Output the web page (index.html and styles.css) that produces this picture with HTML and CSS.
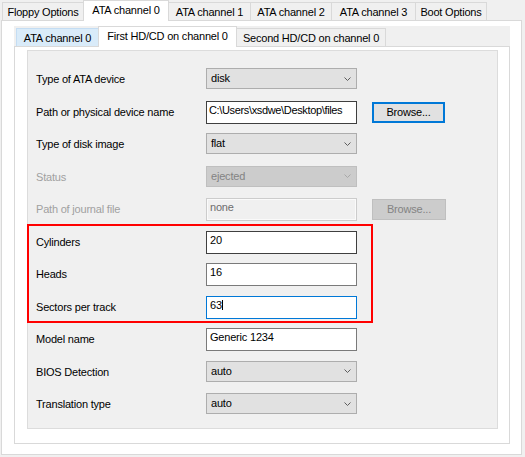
FILE: index.html
```html
<!DOCTYPE html>
<html>
<head>
<meta charset="utf-8">
<link rel="stylesheet" href="styles.css">
</head>
<body>
<div class="dlg">
  <div class="tabs outer-tabs">
    <div class="tab first t-floppy">Floppy Options</div>
    <div class="tab sel t-ata0">ATA channel 0</div>
    <div class="tab t-ata1">ATA channel 1</div>
    <div class="tab t-ata2">ATA channel 2</div>
    <div class="tab t-ata3">ATA channel 3</div>
    <div class="tab t-boot">Boot Options</div>
  </div>
  <div class="pane outer-pane">
    <div class="subtabs">
      <div class="tabs inner-tabs">
        <div class="tab first hover t-ch0">ATA channel 0</div>
        <div class="tab sel t-first">First HD/CD on channel 0</div>
        <div class="tab t-second">Second HD/CD on channel 0</div>
      </div>
      <div class="pane inner-pane">
        <div class="group">
          <div class="row">
            <div class="lbl">Type of ATA device</div>
            <div class="combo"><span>disk</span><svg class="chev" width="7" height="4" viewBox="0 0 7 4"><polyline points="0.5,0.5 3.5,3.5 6.5,0.5" /></svg></div>
          </div>
          <div class="row">
            <div class="lbl">Path or physical device name</div>
            <div class="tb dark path">C:\Users\xsdwe\Desktop\files</div>
            <div class="btn def">Browse...</div>
          </div>
          <div class="row">
            <div class="lbl">Type of disk image</div>
            <div class="combo"><span>flat</span><svg class="chev" width="7" height="4" viewBox="0 0 7 4"><polyline points="0.5,0.5 3.5,3.5 6.5,0.5" /></svg></div>
          </div>
          <div class="row">
            <div class="lbl dis">Status</div>
            <div class="combo dis"><span>ejected</span><svg class="chev" width="7" height="4" viewBox="0 0 7 4"><polyline points="0.5,0.5 3.5,3.5 6.5,0.5" /></svg></div>
          </div>
          <div class="row">
            <div class="lbl dis">Path of journal file</div>
            <div class="tb dis">none</div>
            <div class="btn dis">Browse...</div>
          </div>
          <div class="hl">
            <div class="row">
              <div class="lbl">Cylinders</div>
              <div class="tb dark">20</div>
            </div>
            <div class="row">
              <div class="lbl">Heads</div>
              <div class="tb">16</div>
            </div>
            <div class="row">
              <div class="lbl">Sectors per track</div>
              <div class="tb focus">63<span class="caret"></span></div>
            </div>
          </div>
          <div class="row">
            <div class="lbl">Model name</div>
            <div class="tb">Generic 1234</div>
          </div>
          <div class="row">
            <div class="lbl">BIOS Detection</div>
            <div class="combo"><span>auto</span><svg class="chev" width="7" height="4" viewBox="0 0 7 4"><polyline points="0.5,0.5 3.5,3.5 6.5,0.5" /></svg></div>
          </div>
          <div class="row">
            <div class="lbl">Translation type</div>
            <div class="combo"><span>auto</span><svg class="chev" width="7" height="4" viewBox="0 0 7 4"><polyline points="0.5,0.5 3.5,3.5 6.5,0.5" /></svg></div>
          </div>
        </div>
      </div>
    </div>
  </div>
</div>
</body>
</html>
```

FILE: styles.css
```css
* { box-sizing: border-box; }

body {
  margin: 0;
  background: #f0f0f0;
  font-family: "Liberation Sans", Arial, sans-serif;
  font-size: 11px;
  letter-spacing: -0.2px;
  color: #000;
}

.dlg {
  width: 525px;
  height: 457px;
}

/* ---------- tabs ---------- */
.tabs {
  display: flex;
  align-items: flex-end;
  height: 20px;
  position: relative;
  z-index: 1;
}

.outer-tabs { padding-left: 2px; }

.tab {
  flex: none;
  height: 18px;
  border-top: 1px solid #d9d9d9;
  border-right: 1px solid #d9d9d9;
  background: #f0f0f0;
  text-align: center;
  line-height: 16px;
  padding-top: 1px;
  white-space: nowrap;
}

.tab.first { border-left: 1px solid #d9d9d9; }

.tab.sel {
  height: 21px;
  margin-bottom: -1px;
  background: #fff;
  border-left: 1px solid #d9d9d9;
}

.tab.hover {
  background: #d9ebf9;
  border-color: #c4ddf3;
}

.t-floppy { width: 81px; border-right: 0; }
.t-ata0 { width: 86px; }
.t-ata1 { width: 82px; }
.t-ata2 { width: 81px; }
.t-ata3 { width: 84px; }
.t-boot { width: 71px; }

.t-ch0 { width: 82px; border-right: 0; }
.t-first { width: 139px; }
.t-second { width: 149px; }

/* ---------- panes ---------- */
.pane {
  border: 1px solid #d9d9d9;
  background: #fff;
}

.outer-pane {
  margin-left: 1px;
  width: 521px;
  height: 435px;
}

.subtabs {
  margin: 5px 0 0 12px;
  width: 496px;
}

.inner-tabs {
  background: #f0f0f0;
  padding-left: 2px;
}

.inner-pane {
  width: 496px;
  height: 398px;
}

/* ---------- group ---------- */
.group {
  margin: 3px 0 0 12px;
  width: 471px;
  height: 379px;
  background: #f0f0f0;
  border: 1px solid #dcdcdc;
  padding: 17px 0 0 8px;
  display: flex;
  flex-direction: column;
  gap: 9.5px;
}

.row {
  display: flex;
  align-items: center;
  height: 23px;
}

.lbl {
  flex: none;
  width: 170px;
  white-space: nowrap;
  padding-bottom: 1px;
}

.lbl.dis { color: #a0a0a0; }

.combo {
  flex: none;
  width: 151px;
  height: 21px;
  margin-bottom: 2px;
  border: 1px solid #adadad;
  background: #e1e1e1;
  display: flex;
  align-items: center;
  justify-content: space-between;
  padding: 0 5px 1px 4px;
}

.chev { display: block; margin-top: 1px; }
.chev polyline { fill: none; stroke: #5d5d5d; stroke-width: 1; }

.combo.dis {
  background: #cccccc;
  border-color: #bfbfbf;
  color: #838383;
}
.combo.dis .chev polyline { stroke: #a8a8a8; }

.tb {
  flex: none;
  width: 151px;
  height: 23px;
  border: 1px solid #7a7a7a;
  background: #fff;
  padding: 2px 0 0 3px;
  line-height: 13px;
  overflow: hidden;
  white-space: nowrap;
}

.tb.path { padding-left: 2px; letter-spacing: -0.35px; }
.tb.dark { border-color: #3f3f3f; }
.tb.focus { border-color: #0078d7; }

.tb.dis {
  background: #f0f0f0;
  border-color: #cccccc;
  box-shadow: inset 0 0 0 1px #fafafa;
  color: #6d6d6d;
}

.caret {
  display: inline-block;
  width: 1px;
  height: 10px;
  background: #000;
  vertical-align: -1px;
  margin-left: 0;
}

.btn {
  flex: none;
  margin-left: 15px;
  width: 74px;
  height: 21px;
  border: 1px solid #adadad;
  background: #e1e1e1;
  text-align: center;
  line-height: 19px;
}

.btn.def {
  width: 73px;
  border: 2px solid #0078d7;
  line-height: 17px;
}

.btn.dis {
  background: #cccccc;
  border-color: #bfbfbf;
  color: #838383;
}

/* ---------- highlight ---------- */
.hl {
  width: 346px;
  margin: -6.5px 0 -4.5px -9px;
  padding: 4.5px 0 2.5px 7px;
  border: 2px solid #ff0000;
  display: flex;
  flex-direction: column;
  gap: 9.5px;
}
```
